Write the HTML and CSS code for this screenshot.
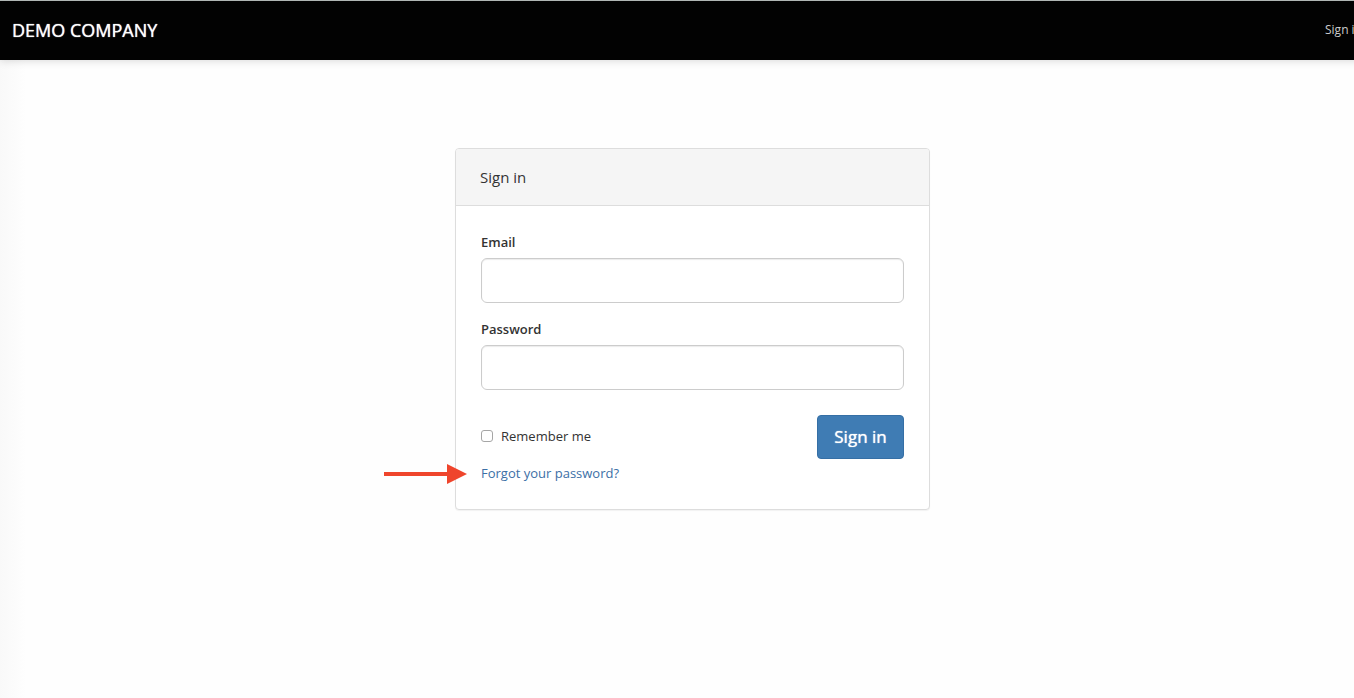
FILE: index.html
```html
<!DOCTYPE html>
<html lang="en">

<head>
    <meta charset="UTF-8">
    <meta name="viewport" content="width=device-width, initial-scale=1.0">
    <title>Sign in</title>
    <link rel="stylesheet" href="styles.css">
</head>

<body>
    <div class="page">
        <header class="navbar">
            <a class="brand" href="#">DEMO COMPANY</a>
            <nav>
                <a class="nav-link" href="#">Sign in</a>
            </nav>
        </header>
        <main class="content">
            <section class="panel">
                <h1 class="panel-heading">Sign in</h1>
                <form class="panel-body">
                    <div class="form-group">
                        <label for="email">Email</label>
                        <input class="form-control" type="email" id="email" name="email">
                    </div>
                    <div class="form-group">
                        <label for="password">Password</label>
                        <input class="form-control" type="password" id="password" name="password">
                    </div>
                    <div class="form-actions">
                        <div class="form-options">
                            <label class="remember" for="remember">
                                <input type="checkbox" id="remember" name="remember">
                                Remember me
                            </label>
                            <div class="forgot">
                                <!-- pointer to the reset link -->
                                <svg class="arrow" width="84" height="20" viewBox="0 0 84 20" aria-hidden="true">
                                    <path d="M0 8h63V0l20 10-20 10v-8H0z" fill="#ef452c" />
                                </svg>
                                <a href="#">Forgot your password?</a>
                            </div>
                        </div>
                        <button class="btn" type="submit">Sign in</button>
                    </div>
                </form>
            </section>
        </main>
    </div>
</body>

</html>
```
FILE: styles.css
```css
* {
    box-sizing: border-box;
}

body {
    margin: 0;
    overflow: hidden;
    background-color: #fefefe;
    color: #333;
    font-family: "Open Sans", sans-serif;
    font-size: 13px;
    line-height: 22px;
}

a {
    color: #3c6fa6;
    text-decoration: none;
}

/* runs a little past the right edge of the window */
.page {
    width: calc(100% + 31px);
    min-height: 100vh;
    background: linear-gradient(to right, #f9f9f9, #fefefe 26px);
}

.navbar {
    position: relative;
    display: flex;
    align-items: center;
    justify-content: space-between;
    height: 60px;
    padding: 0 23px 2px 12px;
    border-top: 1px solid #b0b6b4;
    background-color: #020202;
    box-shadow: 0 1px 8px rgba(0, 0, 0, 0.15);
}

.brand {
    color: #fff;
    font-size: 18px;
    text-shadow: 0 0 1px #fff;
}

.nav-link {
    color: #ccc;
    font-size: 12px;
}

.content {
    padding: 88px 0;
}

.panel {
    width: 475px;
    margin: 0 auto;
    border: 1px solid #ddd;
    border-radius: 4px;
    background-color: #fff;
    box-shadow: 0 1px 1px rgba(0, 0, 0, 0.05);
}

.panel-heading {
    margin: 0;
    padding: 17px 24px;
    border-bottom: 1px solid #ddd;
    border-radius: 3px 3px 0 0;
    background-color: #f5f5f5;
    font-size: 15px;
    font-weight: 400;
}

.panel-body {
    padding: 25px;
}

.form-group {
    margin-bottom: 15px;
}

.form-group label {
    display: block;
    margin-bottom: 5px;
    font-weight: 600;
}

.form-control {
    display: block;
    width: 100%;
    height: 45px;
    padding: 10px 16px;
    border: 1px solid #ccc;
    border-radius: 6px;
    background-color: #fff;
    box-shadow: inset 0 1px 1px rgba(0, 0, 0, 0.08);
    font: inherit;
}

.form-actions {
    display: flex;
    align-items: flex-start;
    justify-content: space-between;
    margin-top: 25px;
}

.form-options {
    padding-top: 10px;
}

.remember {
    display: flex;
    align-items: center;
    gap: 8px;
    margin-bottom: 15px;
}

.remember input {
    appearance: none;
    width: 12px;
    height: 12px;
    margin: 0;
    border: 1px solid #a6a6a6;
    border-radius: 3px;
    background-color: #fff;
}

.remember input:checked {
    background-color: #3f7cb4;
}

.forgot {
    position: relative;
}

.arrow {
    position: absolute;
    top: 2px;
    right: 100%;
    margin-right: 13px;
}

.btn {
    min-width: 87px;
    height: 44px;
    padding: 0 16px;
    border: 1px solid #356fa5;
    border-radius: 4px;
    background-color: #3f7cb4;
    color: #fff;
    font: 400 17px/22px "Open Sans", sans-serif;
    text-shadow: 0 0 1px #fff;
    cursor: pointer;
}
```
